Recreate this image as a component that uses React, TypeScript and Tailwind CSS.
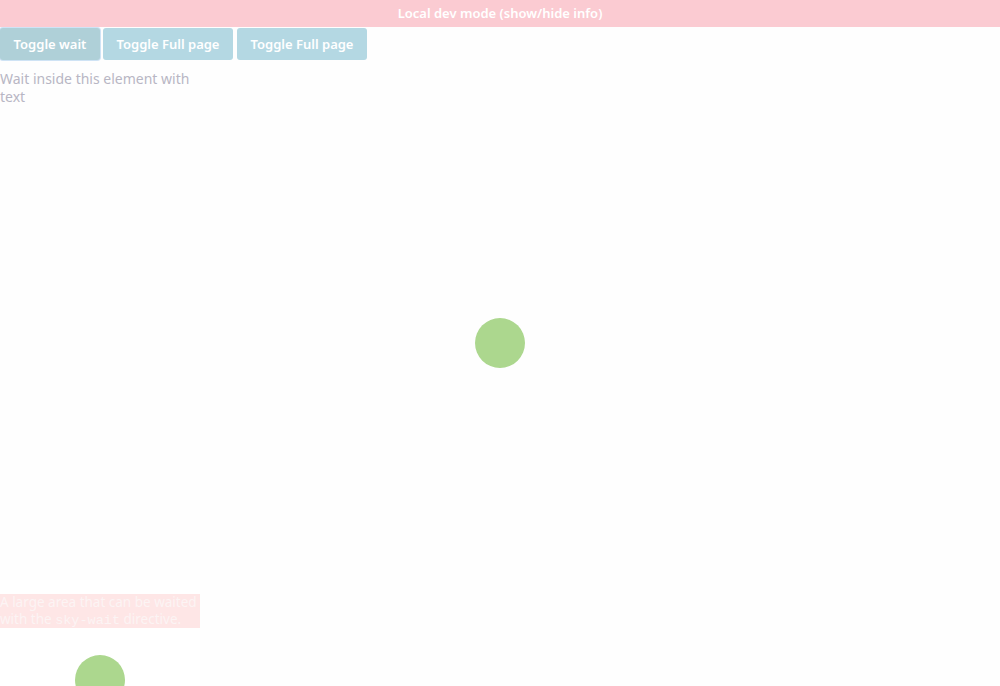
import React from "react";

export default function App() {
  return (
    <div
      className="relative h-[686px] w-[1000px] overflow-hidden bg-[#fefefe]"
      style={{ fontFamily: '"Noto Sans", "Open Sans", sans-serif' }}
    >
      <div className="flex h-[27px] items-center justify-center bg-[#fbcbd2] text-[13px] font-semibold text-white">
        Local dev mode (show/hide info)
      </div>
      <div className="flex h-[686px] flex-col">
        <div className="flex gap-[3px] pt-px">
          <button className="h-[32px] w-[100px] rounded-[3px] bg-[#afd0d8] pt-[2px] text-[13px] font-semibold text-white shadow-[0_0_0_1px_#cfe3f5]">
            Toggle wait
          </button>
          <button className="h-[32px] w-[130px] rounded-[3px] bg-[#b4d8e3] pt-[2px] text-[13px] font-semibold text-white">
            Toggle Full page
          </button>
          <button className="ml-px h-[32px] w-[130px] rounded-[3px] bg-[#b4d8e3] pt-[2px] text-[13px] font-semibold text-white">
            Toggle Full page
          </button>
        </div>
        <div className="mt-[10px] w-[200px] text-[14px] leading-[18px] text-[#b8b6c4]">
          Wait inside this element with text
        </div>
        <div className="flex h-[490px] items-center justify-center">
          <div className="mt-[-16px] h-[50px] w-[50px] rounded-full bg-[#acd78e]" />
        </div>
      </div>
      <div className="absolute left-0 top-[580px] flex h-[106px] w-[200px] flex-col bg-white">
        <div className="mt-[14px] h-[34px] shrink-0 overflow-hidden whitespace-nowrap bg-[#fee6e6] text-[13.5px] leading-[17px] text-[#fcf4f4]">
          A large area that can be waited
          <br />
          with the{" "}
          <span style={{ fontFamily: '"Liberation Mono", monospace' }}>sky-wait</span> directive.
        </div>
        <div className="mt-[27px] flex shrink-0 justify-center">
          <div className="h-[50px] w-[50px] shrink-0 rounded-full bg-[#acd78e]" />
        </div>
      </div>
    </div>
  );
}
